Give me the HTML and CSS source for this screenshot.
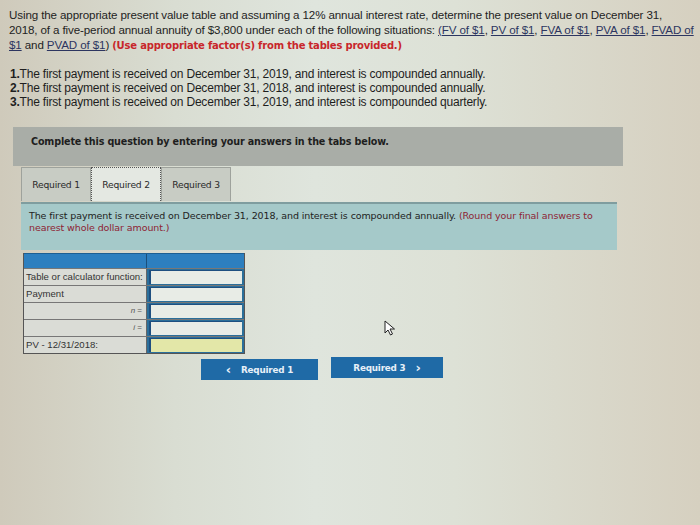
FILE: index.html
```html
<!DOCTYPE html>
<html>
<head>
<meta charset="utf-8">
<link rel="stylesheet" href="styles.css">
</head>
<body>
<div class="page">
  <p class="intro">Using the appropriate present value table and assuming a 12% annual interest rate, determine the present value on December 31,<br>2018, of a five-period annual annuity of $3,800 under each of the following situations: <span class="lnk">(FV of $1</span>, <span class="lnk">PV of $1</span>, <span class="lnk">FVA of $1</span>, <span class="lnk">PVA of $1</span>, <span class="lnk">FVAD of $1</span> and <span class="lnk">PVAD of $1</span>) <span class="red">(Use appropriate factor(s) from the tables provided.)</span></p>
  <ol class="list">
    <li><b>1.</b>The first payment is received on December 31, 2019, and interest is compounded annually.</li>
    <li><b>2.</b>The first payment is received on December 31, 2018, and interest is compounded annually.</li>
    <li><b>3.</b>The first payment is received on December 31, 2019, and interest is compounded quarterly.</li>
  </ol>
  <div class="banner">Complete this question by entering your answers in the tabs below.</div>
  <div class="tabs">
    <div class="tab">Required 1</div>
    <div class="tab active">Required 2</div>
    <div class="tab">Required 3</div>
  </div>
  <div class="panel">The first payment is received on December 31, 2018, and interest is compounded annually. <span class="dred">(Round your final answers to nearest whole dollar amount.)</span></div>
  <div class="calc">
    <div class="row head"><div class="c1"></div><div class="c2"></div></div>
    <div class="row"><div class="c1">Table or calculator function:</div><div class="c2"><div class="inp"></div></div></div>
    <div class="row"><div class="c1">Payment</div><div class="c2"><div class="inp"></div></div></div>
    <div class="row"><div class="c1 r"><i>n</i> =</div><div class="c2"><div class="inp"></div></div></div>
    <div class="row"><div class="c1 r"><i>i</i> =</div><div class="c2"><div class="inp"></div></div></div>
    <div class="row"><div class="c1">PV - 12/31/2018:</div><div class="c2"><div class="inp yel"></div></div></div>
  </div>
  <div class="nav">
    <div class="btn prev"><span class="chev">&lsaquo;</span>Required 1</div>
    <div class="btn next">Required 3<span class="chev r">&rsaquo;</span></div>
  </div>
  <svg class="cursor" width="12" height="16" viewBox="0 0 12 16"><path d="M1 1 L1 13 L4 10 L6.5 15 L8.5 14 L6 9 L10.5 9 Z" fill="#fff" stroke="#222" stroke-width="1"/></svg>
</div>
</body>
</html>
```
FILE: styles.css
```css
html, body { margin: 0; padding: 0; }
body {
  width: 700px; height: 525px; overflow: hidden;
  background: linear-gradient(90deg, #cfcabb 0%, #d9ddd2 25%, #dfe5dd 45%, #dde1d6 65%, #d6d0c0 100%);
  font-family: "Liberation Sans", Arial, sans-serif;
  color: #1e1e1e;
}
.page { position: relative; padding: 7px 0 0 9px; }
.intro {
  margin: 0; width: 688px;
  font-size: 11.6px; line-height: 15px; letter-spacing: -0.12px;
}
.lnk { text-decoration: underline; color: #2c3560; }
.red { color: #c8262b; font-weight: bold; font-family: "DejaVu Sans", sans-serif; font-size: 10px; letter-spacing: -0.2px; }
.list {
  list-style: none; margin: 14px 0 0 0; padding: 0 0 0 1px;
  font-size: 12px; line-height: 14px; letter-spacing: -0.2px;
}
.banner {
  margin: 18px 0 0 4px; width: 610px; height: 39px; box-sizing: border-box;
  background: #a9ada7; padding: 9px 0 0 18px;
  font-family: "DejaVu Sans", sans-serif; font-weight: bold; font-size: 9.6px; letter-spacing: -0.15px;
}
.tabs { display: flex; margin: 1px 0 0 12px; height: 34px; }
.tab {
  width: 70px; box-sizing: border-box; border: 1px solid #9ea29c; border-bottom: none;
  background: #c8ccc4; font-family: "DejaVu Sans", sans-serif; font-size: 9.2px;
  display: flex; align-items: center; justify-content: center; letter-spacing: -0.2px; color: #2a2a2a;
}
.tab.active { background: #e4e8e2; border: 1px dotted #555; border-bottom: none; }
.panel {
  margin: 1px 0 0 12px; width: 596px; height: 48px; box-sizing: border-box;
  background: #a5c9c9; border-top: 2px solid #7f9d9f; padding: 6px 8px 0 8px;
  font-family: "DejaVu Sans", sans-serif; font-size: 9.5px; line-height: 12px; letter-spacing: -0.1px; color: #222;
}
.dred { color: #8e2434; }
.calc { margin: 3px 0 0 14px; width: 220px; border: 1px solid #555; border-top: none; }
.row { display: flex; height: 16px; border-top: 1px solid #777; }
.row.head { height: 14px; background: #2d7fbf; border-top: 1px solid #1d5f93; }
.row.head .c1 { border-right: 1px solid #1a4f7a; background: #2d7fbf; }
.c1 {
  width: 123px; box-sizing: border-box; border-right: 1px solid #666; background: #dadcd6;
  font-size: 9.6px; line-height: 15px; padding-left: 2px; color: #333; white-space: nowrap;
}
.c1.r { text-align: right; padding-right: 4px; font-size: 8px; color: #555; }
.c2 { flex: 1; background: #2b6f9a; padding: 1px 2px; box-sizing: border-box; }
.row.head .c2 { background: #2d7fbf; padding: 0; }
.inp { height: 100%; background: #e8ece6; border-left: 2px solid #1e4f80; border-top: 1px solid #1e4f80; box-sizing: border-box; }
.inp.yel { background: #e3e7a8; }
.nav { display: flex; gap: 13px; margin: 3px 0 0 192px; }
.btn {
  height: 21px; background: #1f6aa6; color: #e8f0f8; box-sizing: border-box;
  font-family: "DejaVu Sans", sans-serif; font-weight: bold; font-size: 8.8px; letter-spacing: -0.2px;
  display: flex; align-items: center; justify-content: center;
}
.chev { font-size: 13px; margin-right: 10px; line-height: 1; }
.chev.r { margin-right: 0; margin-left: 10px; }
.btn.prev { width: 117px; margin-top: 2px; }
.btn.next { width: 112px; }
.cursor { position: absolute; left: 384px; top: 320px; }
```
